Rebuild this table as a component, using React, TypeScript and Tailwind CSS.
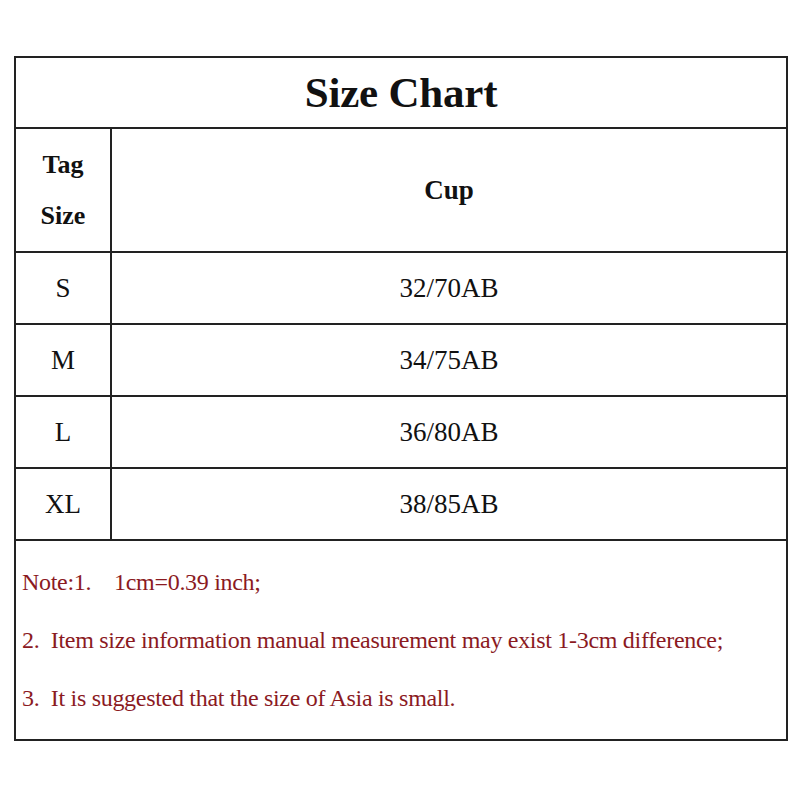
import React from 'react';

const rows = [
  { tag: 'S', cup: '32/70AB' },
  { tag: 'M', cup: '34/75AB' },
  { tag: 'L', cup: '36/80AB' },
  { tag: 'XL', cup: '38/85AB' },
];

const notes = [
  'Note:1.\u00a0\u00a0\u00a0\u00a01cm=0.39 inch;',
  '2.\u00a0\u00a0Item size information manual measurement may exist 1-3cm difference;',
  '3.\u00a0\u00a0It is suggested that the size of Asia is small.',
];

export default function App() {
  return (
    <div className="w-[800px] h-[800px] bg-white pt-[56px] pl-[14px] font-['Liberation_Serif',serif] text-[#111]">
      <div className="w-[774px] border-2 border-[#222] flex flex-col">
        <div className="h-[71px] border-b-2 border-[#222] flex items-center justify-center">
          <h1 className="text-[43px] font-bold tracking-[-0.2px] leading-none">Size Chart</h1>
        </div>

        <div className="h-[124px] border-b-2 border-[#222] flex">
          <div className="w-[96px] border-r-2 border-[#222] flex flex-col items-center justify-center gap-[25px] text-[26px] font-bold leading-none">
            <span>Tag</span>
            <span>Size</span>
          </div>
          <div className="flex-1 flex items-center justify-center text-[27px] font-bold">Cup</div>
        </div>

        {rows.map(row => (
          <div key={row.tag} className="h-[72px] border-b-2 border-[#222] flex text-[27px]">
            <div className="w-[96px] border-r-2 border-[#222] flex items-center justify-center">{row.tag}</div>
            <div className="flex-1 flex items-center justify-center">{row.cup}</div>
          </div>
        ))}

        <div className="h-[198px] flex flex-col pt-[27px] pl-[6px] gap-[29px] text-[24px] leading-[29px] text-[#8b1a1f] tracking-[-0.3px]">
          {notes.map((note, i) => (
            <p key={i}>{note}</p>
          ))}
        </div>
      </div>
    </div>
  );
}
